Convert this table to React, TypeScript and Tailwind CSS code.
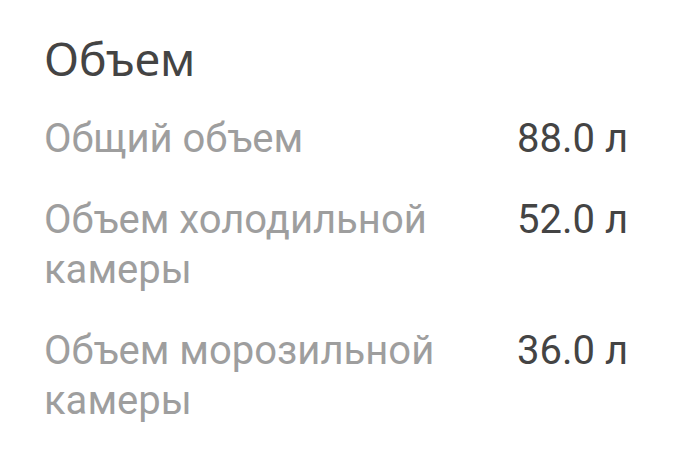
export default function App() {
  const rows = [
    { label: 'Общий объем', value: '88.0 л' },
    { label: 'Объем холодильной камеры', value: '52.0 л' },
    { label: 'Объем морозильной камеры', value: '36.0 л' },
  ];

  return (
    <div className="w-[700px] h-[450px] bg-white pl-[44px] pt-[30px]">
      <h2 className="text-[46px] leading-[56px] text-[#444444] font-['Noto_Sans',sans-serif]">Объем</h2>
      <div className="mt-[28px] flex flex-col gap-[31px] font-['Roboto',sans-serif] text-[40px] leading-[50px]">
        {rows.map((row) => (
          <div key={row.value} className="flex">
            <div className="w-[473px] pr-[20px] text-[#9e9e9e]">{row.label}</div>
            <div className="text-[#444444]">{row.value}</div>
          </div>
        ))}
      </div>
    </div>
  );
}
